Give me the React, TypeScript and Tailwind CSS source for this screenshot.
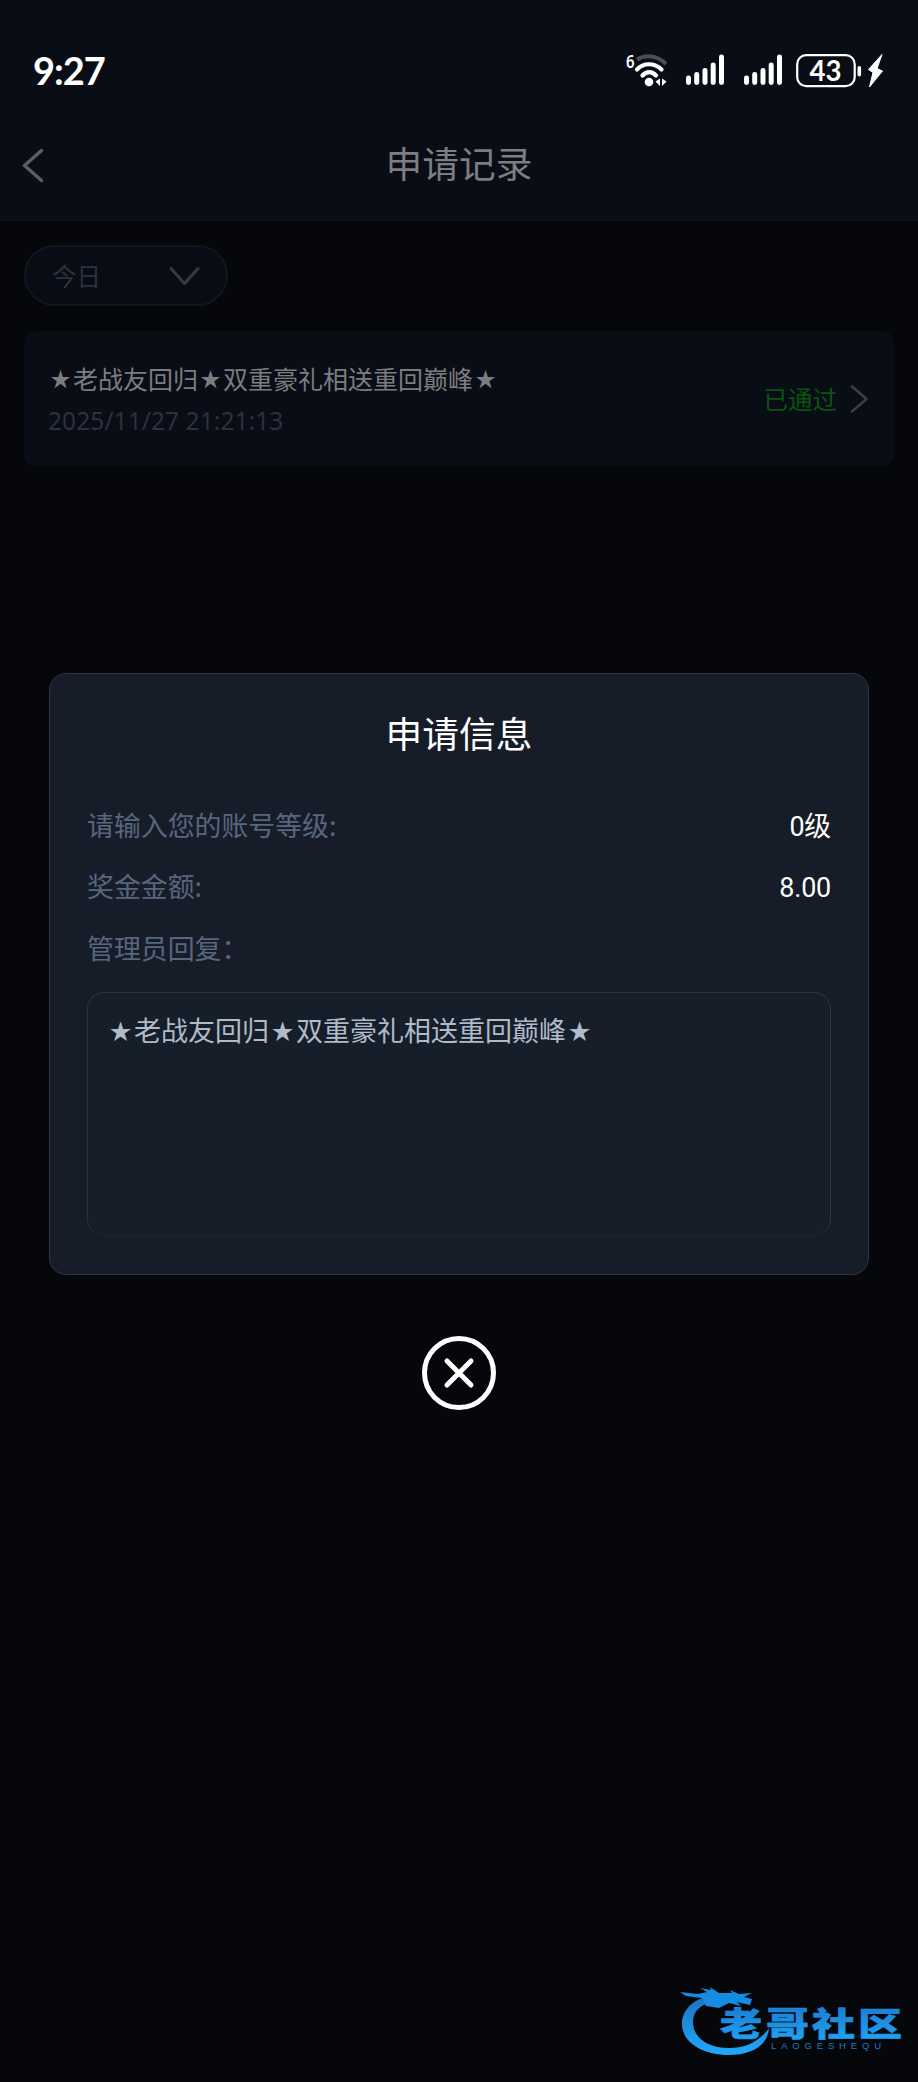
import React from "react";

function WifiIcon() {
  return (
    <svg className="overflow-visible" width="44" height="36" viewBox="0 0 44 36" fill="none" strokeLinecap="round">
      <text x="0" y="14" fill="#fff" fontSize="18" fontWeight="600" fontFamily="Noto Sans" textLength="8.5" lengthAdjust="spacingAndGlyphs">6</text>
      <path d="M11 5.500C19.500 0 31.500 1.500 40 10" stroke="#4b4d53" strokeWidth="4" strokeLinecap="butt" />
      <path d="M11 15.500C17.500 8.500 28.500 8.500 35.500 15.500" stroke="#fff" strokeWidth="4.200" />
      <path d="M16.500 21.500C20.500 17 26 17 30 21.500" stroke="#fff" strokeWidth="4.200" />
      <circle cx="23" cy="28" r="4.300" fill="#fff" />
      <path d="M34 24.500v7.500l-4.500-4.500zM36 24.500v7.500l4.500-4.500z" fill="#fff" />
    </svg>
  );
}

function SignalIcon() {
  return (
    <svg width="40" height="32" viewBox="0 0 40 32" fill="#fff">
      <rect x="0" y="21.500" width="5" height="9.500" rx="2.400" />
      <rect x="8.200" y="18" width="5" height="13" rx="2.400" />
      <rect x="16.500" y="14" width="5" height="17" rx="2.400" />
      <rect x="24.700" y="8.500" width="5" height="22.500" rx="2.400" />
      <rect x="33" y="0.500" width="5" height="30.500" rx="2.400" />
    </svg>
  );
}

function BatteryIcon() {
  return (
    <svg width="90" height="36" viewBox="0 0 90 36">
      <rect x="1.200" y="1.200" width="57.500" height="31" rx="9" fill="none" stroke="#fff" strokeWidth="2.200" />
      <text x="29.500" y="27" fill="#fff" fontSize="29" fontWeight="700" fontFamily="Lato" textAnchor="middle" textLength="32" lengthAdjust="spacingAndGlyphs">43</text>
      <rect x="61.500" y="12" width="3.600" height="10.500" rx="1.800" fill="#fff" />
      <path d="M86 0.500L72.500 15.500L77 18.500L73.500 33L86.500 17L81 14.500Z" fill="#fff" stroke="#fff" strokeWidth="1" strokeLinejoin="round" />
    </svg>
  );
}

function StatusBar() {
  return (
    <div className="flex h-[110px] items-start justify-between pl-[33px] pr-[32px]">
      <div className="mt-[46px] font-['Lato'] text-[38px] leading-[48px] font-bold tracking-[-1px] text-white">9:27</div>
      <div className="mt-[54px] flex items-start">
        <WifiIcon />
        <div className="ml-[16px]"><SignalIcon /></div>
        <div className="ml-[18px]"><SignalIcon /></div>
        <div className="ml-[12px]"><BatteryIcon /></div>
      </div>
    </div>
  );
}

function Watermark() {
  return (
    <svg className="absolute left-[676px] top-[1980px]" width="230" height="80" viewBox="0 0 230 80">
      <defs>
        <linearGradient id="blue" x1="0" y1="0" x2="0" y2="1">
          <stop offset="0" stopColor="#1d72c4" />
          <stop offset="1" stopColor="#20a8fb" />
        </linearGradient>
      </defs>
      <path d="M30 17C14 21 5 33 6 46C8 64 28 75 53 75C76 75 92 65 93 48C83 62 69 68 53 68C32 68 17 58 17 42C17 31 25 24 37 22Z" fill="url(#blue)" />
      <path d="M4 12L22 14L31 12L24 8L35 10L34 7L43 13L56 13L54 10L63 14L76 13L68 17L76 19L74 25L61 22L65 26L53 23L43 28L30 26L26 18L10 16Z" fill="#168be2" />
      <g fill="url(#blue)" stroke="#1b91e3" strokeWidth="0.600" fontWeight="900" fontFamily="Noto Sans CJK SC" fontSize="33">
        <text x="44" y="55.500" textLength="42" lengthAdjust="spacingAndGlyphs">老</text>
        <text x="90" y="55.500" textLength="43" lengthAdjust="spacingAndGlyphs">哥</text>
        <text x="136" y="55.500" textLength="43" lengthAdjust="spacingAndGlyphs">社</text>
        <text x="182" y="55.500" textLength="44" lengthAdjust="spacingAndGlyphs">区</text>
      </g>
      <text x="95" y="69" fill="#1c7dc2" fontSize="9.500" fontWeight="400" fontFamily="Liberation Sans" textLength="110">LAOGESHEQU</text>
    </svg>
  );
}

function Star() {
  return <span className="inline-block w-[1.220em] text-center align-[0.080em] text-[0.820em] leading-none">★</span>;
}

function ActivityName() {
  return (
    <>
      <Star />老战友回归<Star />双重豪礼相送重回巅峰<Star />
    </>
  );
}

function Row({ label, value }: { label: string; value?: string }) {
  return (
    <div className="flex h-[61.500px] items-center justify-between text-[26.900px]">
      <span className="text-[#58667f]">{label}</span>
      <span className="mt-[4px] font-['Roboto','Noto_Sans_CJK_SC',sans-serif] tracking-[-0.200px] text-white">{value}</span>
    </div>
  );
}

export default function App() {
  return (
    <div className="relative flex h-[2082px] w-[918px] flex-col overflow-hidden bg-[#06070b] font-['Noto_Sans_CJK_SC',sans-serif]">
      <header className="h-[221px] border-b border-[#0e1116] bg-[#090d15]">
        <StatusBar />
        <div className="grid h-[110px] grid-cols-[100px_1fr_100px] items-start">
          <svg className="ml-[19px] mt-[36px]" width="28" height="40" viewBox="0 0 28 40" fill="none" stroke="#5b5d62" strokeWidth="3.500" strokeLinecap="round" strokeLinejoin="round">
            <path d="M22.500 4.500L5.500 19.500L22.500 34.500" />
          </svg>
          <h1 className="mt-[25px] text-center text-[36.700px] leading-[54px] text-[#7c7e82]">申请记录</h1>
        </div>
      </header>

      <main className="px-[24px] pt-[24px]">
        <div className="flex h-[61px] w-[204px] items-center justify-between rounded-full border-2 border-[#10171e] bg-[#080c15] pl-[26px] pr-[26px]">
          <span className="mt-[2px] text-[24.500px] text-[#2c323e]">今日</span>
          <svg width="32" height="22" viewBox="0 0 32 22" fill="none" stroke="#363a43" strokeWidth="3" strokeLinecap="round" strokeLinejoin="round">
            <path d="M3 3.500L16.500 18.500L30 3.500" />
          </svg>
        </div>
        <div className="mt-[25px] flex h-[135px] items-center justify-between rounded-[12px] bg-[#090d15] pl-[24px] pr-[25px]">
          <div className="pt-[2px]">
            <div className="h-[41px] text-[25px] leading-[41px] text-[#7b7d80]"><ActivityName /></div>
            <div className="pt-px font-['Noto_Sans'] text-[24.500px] leading-[41px] tracking-[0.080px] text-[#2c313e]">2025/11/27 21:21:13</div>
          </div>
          <div className="flex items-center gap-[12px]">
            <span className="mt-[2px] text-[24.500px] text-[#0b5310]">已通过</span>
            <svg width="20" height="30" viewBox="0 0 20 30" fill="none" stroke="#3a3d45" strokeWidth="2.600" strokeLinecap="round" strokeLinejoin="round">
              <path d="M3 2.500L17.500 15L3 27.500" />
            </svg>
          </div>
        </div>
      </main>

      <section className="mx-[49px] mt-[207px] h-[602px] shrink-0 rounded-[17px] border border-[#2b3645] bg-[#161d28] px-[37px]">
        <h2 className="mt-[31px] text-center text-[36.700px] leading-[54px] text-white">申请信息</h2>
        <div className="mt-[35px]">
          <Row label="请输入您的账号等级:" value="0级" />
          <Row label="奖金金额:" value="8.00" />
          <Row label="管理员回复：" />
        </div>
        <div className="mt-[13px] h-[244px] rounded-[17px] border border-[#293442] border-b-[#1b2430] bg-[#161e29] pl-[19px] pt-[17px] text-[27px] leading-[40px] text-[#b0bbc9]">
          <ActivityName />
        </div>
      </section>

      <button className="mt-[60px] self-center" aria-label="关闭">
        <svg width="76" height="76" viewBox="0 0 76 76" fill="none" stroke="#fff" strokeWidth="5" strokeLinecap="round">
          <circle cx="38" cy="38" r="34.500" />
          <path d="M26 26L50 50M50 26L26 50" />
        </svg>
      </button>
      <Watermark />
    </div>
  );
}
